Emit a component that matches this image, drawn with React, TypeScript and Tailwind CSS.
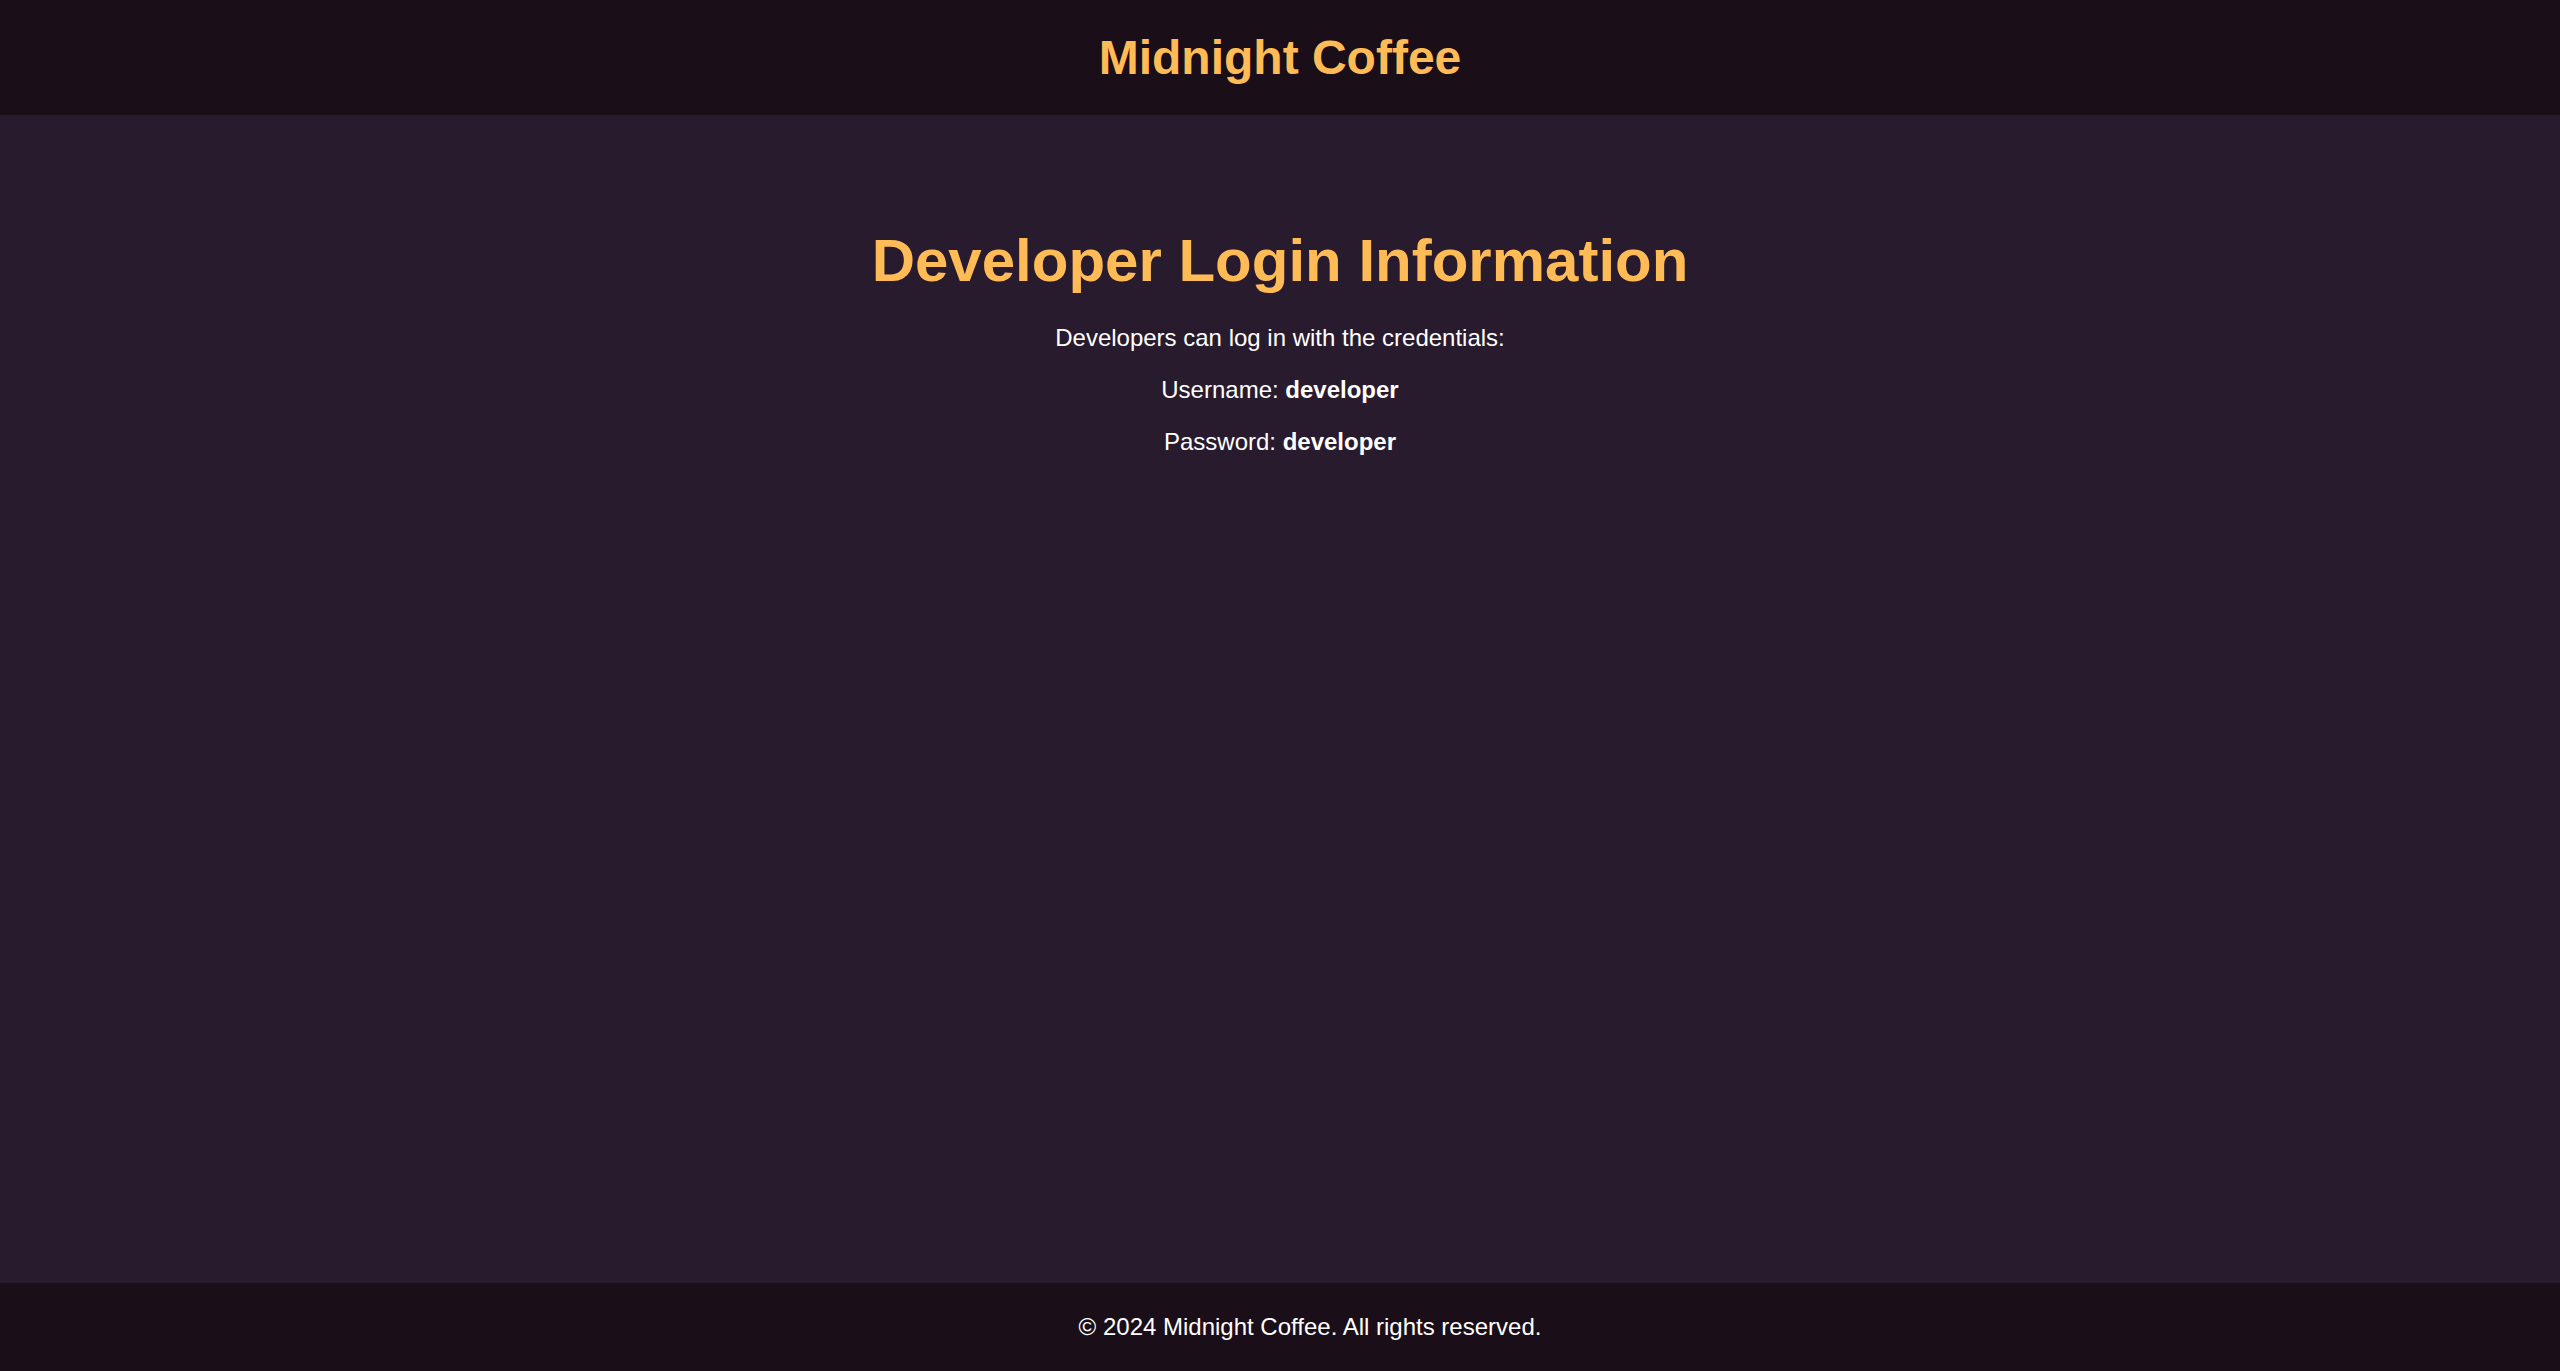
export default function App() {
  return (
    <div
      className="min-h-screen flex flex-col bg-[#281b2e] text-white"
      style={{ fontFamily: '"Liberation Sans", Arial, sans-serif' }}
    >
      {/* ── Header ───────────────────────────────────────────── */}
      <header className="bg-[#1a0e18] py-[30px] text-center">
        <h1 className="text-[48px] leading-[normal] font-bold text-[#ffbb55]">
          Midnight Coffee
        </h1>
      </header>

      {/* ── Main ─────────────────────────────────────────────── */}
      <main className="flex-1 flex flex-col items-center text-center pt-[111px]">
        <h2 className="text-[60px] leading-[normal] font-bold text-[#ffbb55]">
          Developer Login Information
        </h2>
        <p className="mt-[29px] text-[24px] leading-[normal]">
          Developers can log in with the credentials:
        </p>
        <p className="mt-[24px] text-[24px] leading-[normal]">
          Username: <strong className="font-bold">developer</strong>
        </p>
        <p className="mt-[24px] text-[24px] leading-[normal]">
          Password: <strong className="font-bold">developer</strong>
        </p>
      </main>

      {/* ── Footer ───────────────────────────────────────────── */}
      <footer className="bg-[#1a0e18] py-[30px] pl-[60px] text-center">
        <p className="text-[24px] leading-[normal]">
          © 2024 Midnight Coffee. All rights reserved.
        </p>
      </footer>
    </div>
  )
}
